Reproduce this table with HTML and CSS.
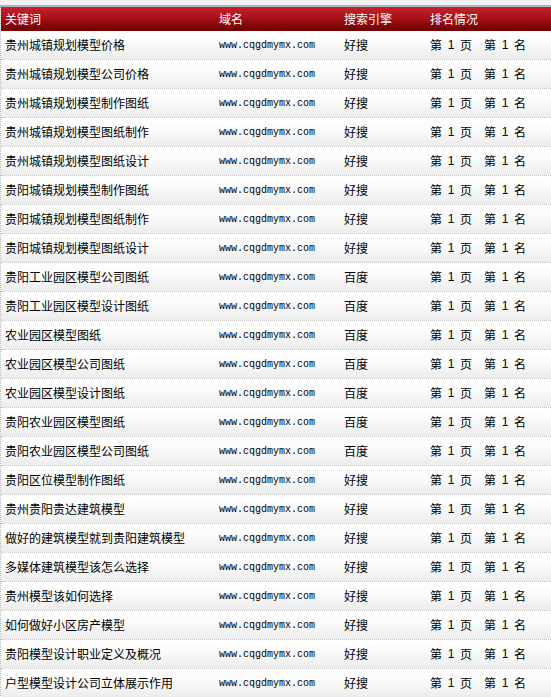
FILE: index.html
```html
<!DOCTYPE html>
<html lang="zh-CN">
<head>
<meta charset="utf-8">
<title>排名情况</title>
<link rel="stylesheet" href="styles.css">
</head>
<body>
<div class="topband"></div>
<div class="table">
  <div class="row head">
    <div class="c kw">关键词</div>
    <div class="c dm">域名</div>
    <div class="c en">搜索引擎</div>
    <div class="c rk">排名情况</div>
  </div>
  <div class="row"><div class="c kw">贵州城镇规划模型价格</div><div class="c dm">www.cqgdmymx.com</div><div class="c en">好搜</div><div class="c rk"><span>第<i>1</i>页</span><span>第<i>1</i>名</span></div></div>
  <div class="row"><div class="c kw">贵州城镇规划模型公司价格</div><div class="c dm">www.cqgdmymx.com</div><div class="c en">好搜</div><div class="c rk"><span>第<i>1</i>页</span><span>第<i>1</i>名</span></div></div>
  <div class="row"><div class="c kw">贵州城镇规划模型制作图纸</div><div class="c dm">www.cqgdmymx.com</div><div class="c en">好搜</div><div class="c rk"><span>第<i>1</i>页</span><span>第<i>1</i>名</span></div></div>
  <div class="row"><div class="c kw">贵州城镇规划模型图纸制作</div><div class="c dm">www.cqgdmymx.com</div><div class="c en">好搜</div><div class="c rk"><span>第<i>1</i>页</span><span>第<i>1</i>名</span></div></div>
  <div class="row"><div class="c kw">贵州城镇规划模型图纸设计</div><div class="c dm">www.cqgdmymx.com</div><div class="c en">好搜</div><div class="c rk"><span>第<i>1</i>页</span><span>第<i>1</i>名</span></div></div>
  <div class="row"><div class="c kw">贵阳城镇规划模型制作图纸</div><div class="c dm">www.cqgdmymx.com</div><div class="c en">好搜</div><div class="c rk"><span>第<i>1</i>页</span><span>第<i>1</i>名</span></div></div>
  <div class="row"><div class="c kw">贵阳城镇规划模型图纸制作</div><div class="c dm">www.cqgdmymx.com</div><div class="c en">好搜</div><div class="c rk"><span>第<i>1</i>页</span><span>第<i>1</i>名</span></div></div>
  <div class="row"><div class="c kw">贵阳城镇规划模型图纸设计</div><div class="c dm">www.cqgdmymx.com</div><div class="c en">好搜</div><div class="c rk"><span>第<i>1</i>页</span><span>第<i>1</i>名</span></div></div>
  <div class="row"><div class="c kw">贵阳工业园区模型公司图纸</div><div class="c dm">www.cqgdmymx.com</div><div class="c en">百度</div><div class="c rk"><span>第<i>1</i>页</span><span>第<i>1</i>名</span></div></div>
  <div class="row"><div class="c kw">贵阳工业园区模型设计图纸</div><div class="c dm">www.cqgdmymx.com</div><div class="c en">百度</div><div class="c rk"><span>第<i>1</i>页</span><span>第<i>1</i>名</span></div></div>
  <div class="row"><div class="c kw">农业园区模型图纸</div><div class="c dm">www.cqgdmymx.com</div><div class="c en">百度</div><div class="c rk"><span>第<i>1</i>页</span><span>第<i>1</i>名</span></div></div>
  <div class="row"><div class="c kw">农业园区模型公司图纸</div><div class="c dm">www.cqgdmymx.com</div><div class="c en">百度</div><div class="c rk"><span>第<i>1</i>页</span><span>第<i>1</i>名</span></div></div>
  <div class="row"><div class="c kw">农业园区模型设计图纸</div><div class="c dm">www.cqgdmymx.com</div><div class="c en">百度</div><div class="c rk"><span>第<i>1</i>页</span><span>第<i>1</i>名</span></div></div>
  <div class="row"><div class="c kw">贵阳农业园区模型图纸</div><div class="c dm">www.cqgdmymx.com</div><div class="c en">百度</div><div class="c rk"><span>第<i>1</i>页</span><span>第<i>1</i>名</span></div></div>
  <div class="row"><div class="c kw">贵阳农业园区模型公司图纸</div><div class="c dm">www.cqgdmymx.com</div><div class="c en">百度</div><div class="c rk"><span>第<i>1</i>页</span><span>第<i>1</i>名</span></div></div>
  <div class="row"><div class="c kw">贵阳区位模型制作图纸</div><div class="c dm">www.cqgdmymx.com</div><div class="c en">好搜</div><div class="c rk"><span>第<i>1</i>页</span><span>第<i>1</i>名</span></div></div>
  <div class="row"><div class="c kw">贵州贵阳贵达建筑模型</div><div class="c dm">www.cqgdmymx.com</div><div class="c en">好搜</div><div class="c rk"><span>第<i>1</i>页</span><span>第<i>1</i>名</span></div></div>
  <div class="row"><div class="c kw">做好的建筑模型就到贵阳建筑模型</div><div class="c dm">www.cqgdmymx.com</div><div class="c en">好搜</div><div class="c rk"><span>第<i>1</i>页</span><span>第<i>1</i>名</span></div></div>
  <div class="row"><div class="c kw">多媒体建筑模型该怎么选择</div><div class="c dm">www.cqgdmymx.com</div><div class="c en">好搜</div><div class="c rk"><span>第<i>1</i>页</span><span>第<i>1</i>名</span></div></div>
  <div class="row"><div class="c kw">贵州模型该如何选择</div><div class="c dm">www.cqgdmymx.com</div><div class="c en">好搜</div><div class="c rk"><span>第<i>1</i>页</span><span>第<i>1</i>名</span></div></div>
  <div class="row"><div class="c kw">如何做好小区房产模型</div><div class="c dm">www.cqgdmymx.com</div><div class="c en">好搜</div><div class="c rk"><span>第<i>1</i>页</span><span>第<i>1</i>名</span></div></div>
  <div class="row"><div class="c kw">贵阳模型设计职业定义及概况</div><div class="c dm">www.cqgdmymx.com</div><div class="c en">好搜</div><div class="c rk"><span>第<i>1</i>页</span><span>第<i>1</i>名</span></div></div>
  <div class="row"><div class="c kw">户型模型设计公司立体展示作用</div><div class="c dm">www.cqgdmymx.com</div><div class="c en">好搜</div><div class="c rk"><span>第<i>1</i>页</span><span>第<i>1</i>名</span></div></div>
</div>
</body>
</html>
```
FILE: styles.css
```css
html, body {
  margin: 0;
  padding: 0;
  background: #ffffff;
}
body {
  font-family: "Noto Sans CJK SC", "Noto Sans", sans-serif;
  font-size: 12px;
  color: #000;
  width: 551px;
  overflow: hidden;
}
.topband {
  height: 5px;
  background: #f0f0f0;
  border-bottom: 2px solid #a9b6c5;
}
.table {
  display: flex;
  flex-direction: column;
  border-left: 1px dotted #a9b6c5;
}
.row {
  display: flex;
  align-items: center;
  height: 28px;
  border-bottom: 1px dotted #c4c4c4;
  background: linear-gradient(to bottom, #ffffff 0%, #fbfbfb 40%, #ececec 100%);
  line-height: 16px;
}
.row.head {
  height: 24px;
  border-bottom: none;
  background: linear-gradient(to bottom, #c9222a 0%, #a81219 45%, #6c0000 100%);
  color: #fff;
}
.c {
  flex: none;
  white-space: nowrap;
}
.kw {
  width: 214px;
  padding-left: 4px;
}
.dm {
  width: 125px;
}
.row:not(.head) .dm {
  font-family: "Liberation Mono", "DejaVu Sans Mono", monospace;
  font-size: 10px;
  padding-top: 2px;
}
.en {
  width: 86px;
}
.rk {
  width: 120px;
  display: flex;
  gap: 12px;
}
.rk span {
  display: inline-flex;
}
.rk i {
  font-style: normal;
  display: inline-block;
  width: 18px;
  text-align: center;
  font-family: "Liberation Sans", sans-serif;
}
```
